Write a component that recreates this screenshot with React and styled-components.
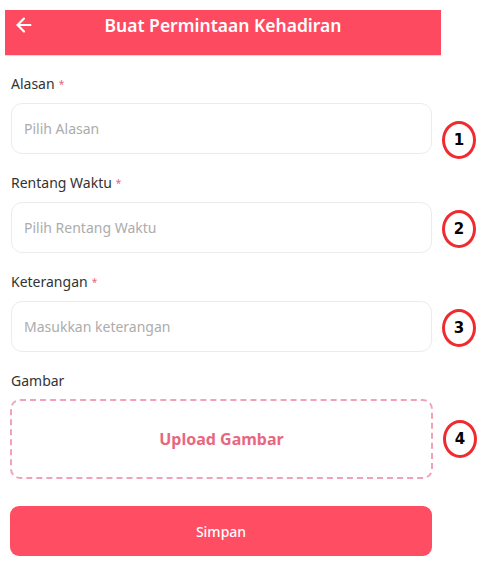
import React from 'react';
import styled, { createGlobalStyle } from 'styled-components';
import { ArrowLeft } from 'lucide-react';

const GlobalStyle = createGlobalStyle`
  body {
    margin: 0;
    background: #ffffff;
    font-family: "Noto Sans", "Open Sans", sans-serif;
  }
`;

const Page = styled.div`
  width: 496px;
  padding-top: 10px;
`;

const Header = styled.header`
  margin-left: 5px;
  width: 436px;
  height: 45px;
  background: #fe4a61;
  border-bottom: 1px solid #f7d3da;
  position: relative;
  display: flex;
  align-items: flex-start;
  justify-content: center;
  color: #fff;
`;

const BackButton = styled.button`
  position: absolute;
  left: 8px;
  top: 4px;
  background: none;
  border: none;
  padding: 0;
  color: #fff;
  display: flex;
`;

const Title = styled.h1`
  margin: 0;
  margin-top: 3px;
  font-size: 17.5px;
  font-weight: 600;
  line-height: 24px;
`;

const Form = styled.form`
  padding: 18px 0 0 11px;
  display: flex;
  flex-direction: column;
`;

const Field = styled.div`
  display: flex;
  flex-direction: column;
  margin-bottom: ${(p) => p.$gap || 19}px;
`;

const Label = styled.label`
  font-size: 14px;
  line-height: 20px;
  color: #333;
  margin-bottom: ${(p) => p.$gap || 9}px;

  span {
    color: #e8637a;
    font-size: 10px;
    margin-left: 4px;
    vertical-align: top;
  }
`;

const ControlRow = styled.div`
  display: flex;
  align-items: center;
  gap: 10px;
`;

const Input = styled.input`
  box-sizing: border-box;
  width: 421px;
  height: 51px;
  border: 1px solid #ececec;
  border-radius: 11px;
  padding: 0 12px;
  font-family: inherit;
  font-size: 14px;
  color: #333;
  outline: none;

  &::placeholder {
    color: #acacac;
  }
`;

const Upload = styled.div`
  box-sizing: border-box;
  width: 423px;
  height: 80px;
  margin-left: -1px;
  border: 2px dashed #f0a3b6;
  border-radius: 10px;
  display: flex;
  align-items: center;
  justify-content: center;
  color: #e8677f;
  font-weight: 700;
  font-size: 16px;
`;

const Badge = styled.div`
  box-sizing: border-box;
  flex: none;
  width: 34px;
  height: 38px;
  transform: translateY(${(p) => p.$shift || 0}px);
  border: 3px solid #f02b2f;
  border-radius: 50%;
  display: flex;
  align-items: center;
  justify-content: center;
  font-family: "DejaVu Sans", sans-serif;
  font-weight: 700;
  font-size: 15px;
  color: #000;
`;

const SaveButton = styled.button`
  width: 422px;
  height: 50px;
  margin-left: -1px;
  margin-top: 9px;
  border: none;
  border-radius: 9px;
  background: #ff4d63;
  color: #fff;
  font-family: inherit;
  font-size: 14px;
  font-weight: 500;
`;

const fields = [
  { label: 'Alasan', placeholder: 'Pilih Alasan', badge: '1', shift: 11 },
  { label: 'Rentang Waktu', placeholder: 'Pilih Rentang Waktu', badge: '2', shift: 1 },
  { label: 'Keterangan', placeholder: 'Masukkan keterangan', badge: '3', shift: 1 },
];

const App = () => (
  <Page>
    <GlobalStyle />
    <Header>
      <BackButton type="button">
        <ArrowLeft size={22} strokeWidth={2.4} />
      </BackButton>
      <Title>Buat Permintaan Kehadiran</Title>
    </Header>

    <Form onSubmit={(e) => e.preventDefault()}>
      {fields.map((f) => (
        <Field key={f.label}>
          <Label>
            {f.label}
            <span>*</span>
          </Label>
          <ControlRow>
            <Input placeholder={f.placeholder} />
            <Badge $shift={f.shift}>{f.badge}</Badge>
          </ControlRow>
        </Field>
      ))}

      <Field $gap={18}>
        <Label $gap={8}>Gambar</Label>
        <ControlRow>
          <Upload>Upload Gambar</Upload>
          <Badge>4</Badge>
        </ControlRow>
      </Field>

      <SaveButton type="submit">Simpan</SaveButton>
    </Form>
  </Page>
);

export default App;
